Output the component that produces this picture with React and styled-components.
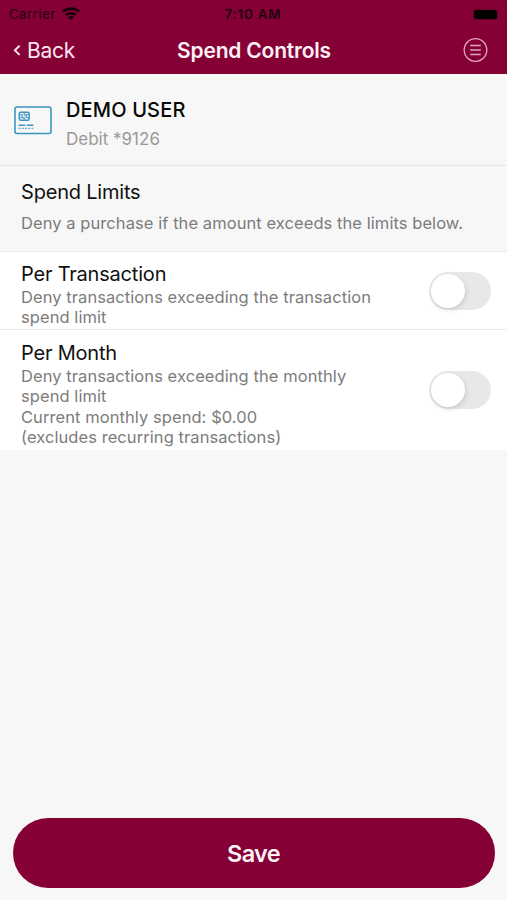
import React, { useState } from 'react';
import styled, { createGlobalStyle } from 'styled-components';

const GlobalStyle = createGlobalStyle`
  * {
    box-sizing: border-box;
  }

  body {
    margin: 0;
    background: #f7f7f7;
    font-family: Inter, 'Liberation Sans', sans-serif;
  }
`;

const Screen = styled.div`
  display: flex;
  flex-direction: column;
  height: 900px;
  background: #f7f7f7;
`;

const Header = styled.header`
  height: 74px;
  background: #840035;
`;

const StatusBar = styled.div`
  display: grid;
  grid-template-columns: 1fr auto 1fr;
  align-items: center;
  height: 27px;
  padding: 0 10px 0 9px;
  color: #22000e;
  font-size: 13px;
  line-height: 27px;
`;

const Carrier = styled.div`
  display: flex;
  align-items: center;
  gap: 6px;
  letter-spacing: 0.6px;
`;

const Clock = styled.div`
  padding-top: 1px;
  font-size: 13.5px;
  font-weight: 600;
  letter-spacing: 0.7px;
`;

const Battery = styled.div`
  justify-self: end;
  width: 23px;
  height: 9px;
  border-radius: 2px;
  background: #000;
  box-shadow: 0 0 2px rgba(0, 0, 0, 0.6);
`;

const NavBar = styled.nav`
  display: grid;
  grid-template-columns: 1fr auto 1fr;
  align-items: center;
  height: 47px;
  padding: 0 19px 0 13px;
  color: #fff;
`;

const BackButton = styled.button`
  display: flex;
  align-items: center;
  gap: 6px;
  padding: 0;
  border: none;
  background: none;
  color: #fbe6ef;
  font-family: inherit;
  font-size: 21px;
  line-height: 26px;
  letter-spacing: -0.3px;
`;

const NavTitle = styled.h1`
  margin: 0;
  padding-left: 7px;
  font-size: 21px;
  font-weight: 600;
  line-height: 26px;
  letter-spacing: -0.2px;
  color: #fdf0f5;
`;

const MenuButton = styled.button`
  justify-self: end;
  display: flex;
  padding: 0;
  border: none;
  background: none;
  color: #e3a5bf;
`;

const CardRow = styled.section`
  display: flex;
  gap: 14px;
  height: 92px;
  padding: 22px 14px 0;
  border-bottom: 1px solid #e6e6e6;
`;

const CardIcon = styled.svg`
  margin-top: 10px;
`;

const CardHolder = styled.div`
  color: #080808;
  font-size: 20px;
  font-weight: 500;
  line-height: 28px;
  letter-spacing: 0.15px;
`;

const CardNumber = styled.div`
  margin-top: 2px;
  color: #999;
  font-size: 17px;
  line-height: 26px;
`;

const LimitsIntro = styled.section`
  height: 86px;
  padding: 13px 21px 0;
  border-bottom: 1px solid #ebebeb;
`;

const Title = styled.h2`
  margin: 0;
  color: #111;
  font-size: 20px;
  font-weight: 400;
  line-height: 26px;
  letter-spacing: -0.2px;
`;

const Description = styled.p`
  margin: ${props => props.$spaced ? '8px 0 0' : '0'};
  color: #7c7c7c;
  font-size: 16.5px;
  line-height: 20.4px;
  letter-spacing: 0.07px;
  white-space: pre-line;
`;

const LimitRow = styled.section`
  display: flex;
  align-items: center;
  justify-content: space-between;
  height: ${props => props.$height}px;
  padding: 0 16px 0 21px;
  background: #fff;
  border-bottom: ${props => props.$last ? 'none' : '1px solid #e9e9e9'};
`;

const LimitText = styled.div`
  width: 380px;
  padding-top: 7px;
`;

const Toggle = styled.button`
  width: 62px;
  height: 38px;
  padding: 2px;
  border: none;
  border-radius: 19px;
  background: ${props => props.$on ? '#840035' : '#e8e8ea'};
`;

const Knob = styled.span`
  display: block;
  width: 34px;
  height: 34px;
  border-radius: 50%;
  background: #fff;
  box-shadow: 1px 2px 5px rgba(0, 0, 0, 0.13);
  transform: translateX(${props => props.$on ? '24px' : '0'});
`;

const Footer = styled.footer`
  margin-top: auto;
  padding: 0 12.5px 12px;
`;

const SaveButton = styled.button`
  display: block;
  width: 100%;
  height: 70px;
  padding: 0;
  border: none;
  border-radius: 35px;
  background: #840035;
  color: #fff3f8;
  font-family: inherit;
  font-size: 23.5px;
  font-weight: 600;
  letter-spacing: -0.7px;
`;

const limits = [
  {
    id: 'transaction',
    title: 'Per Transaction',
    text: 'Deny transactions exceeding the transaction\nspend limit',
    height: 78,
  },
  {
    id: 'month',
    title: 'Per Month',
    text: 'Deny transactions exceeding the monthly\nspend limit\nCurrent monthly spend: $0.00\n(excludes recurring transactions)',
    height: 120,
  },
];

const App = () => {
  const [enabled, setEnabled] = useState({});

  const toggle = (id) => {
    setEnabled({ ...enabled, [id]: !enabled[id] });
  };

  return (
    <Screen>
      <GlobalStyle />
      <Header>
        <StatusBar>
          <Carrier>
            Carrier
            <svg width="18" height="14" viewBox="0 0 18 14" fill="none" stroke="#16000a" strokeWidth="2.5">
              <path d="M1 4.7C5.5 .4 12.5 .4 17 4.7" />
              <path d="M4 8.1C6.8 5.5 11.2 5.5 14 8.1" />
              <path d="M9 13L6 10C7.7 8.5 10.3 8.5 12 10Z" fill="#16000a" stroke="none" />
            </svg>
          </Carrier>
          <Clock>7:10 AM</Clock>
          <Battery />
        </StatusBar>
        <NavBar>
          <BackButton>
            <svg width="8" height="12" viewBox="0 0 8 12" fill="none" stroke="currentColor" strokeWidth="1.9">
              <path d="M6.6 .7L1.8 5.3l4.8 4.6" />
            </svg>
            Back
          </BackButton>
          <NavTitle>Spend Controls</NavTitle>
          <MenuButton aria-label="Menu">
            <svg width="25" height="25" viewBox="0 0 25 25" fill="none" stroke="currentColor" strokeWidth="1.3">
              <circle cx="12.5" cy="12" r="11.3" />
              <path d="M7.2 7.5h10.6M7.2 12h10.6M7.2 16.5h10.6" />
            </svg>
          </MenuButton>
        </NavBar>
      </Header>

      <CardRow>
        <CardIcon width="38" height="29" viewBox="0 0 38 29" fill="none" stroke="#3a96bf">
          <rect x="1" y="1" width="36" height="26.5" rx="2" strokeWidth="1.6" />
          <rect x="5.2" y="6.2" width="10" height="8" rx="1.5" strokeWidth="1.4" />
          <path d="M5 8.8h3.2v3H5M15.4 8.8h-3.2v3h3.2M10.2 6v3h2M8.2 11.8h2V14" strokeWidth="1.1" />
          <path d="M4.6 19.2h6.8M12.8 19.2h6.6" strokeWidth="1.4" />
          <path d="M4.6 22.4h15" strokeWidth="1.2" strokeDasharray="2 1.2" opacity="0.75" />
        </CardIcon>
        <div>
          <CardHolder>DEMO USER</CardHolder>
          <CardNumber>Debit *9126</CardNumber>
        </div>
      </CardRow>

      <LimitsIntro>
        <Title>Spend Limits</Title>
        <Description $spaced>Deny a purchase if the amount exceeds the limits below.</Description>
      </LimitsIntro>

      {limits.map((limit, i) => (
        <LimitRow key={limit.id} $height={limit.height} $last={i === limits.length - 1}>
          <LimitText>
            <Title>{limit.title}</Title>
            <Description>{limit.text}</Description>
          </LimitText>
          <Toggle
            role="switch"
            aria-label={limit.title}
            aria-checked={!!enabled[limit.id]}
            $on={enabled[limit.id]}
            onClick={() => toggle(limit.id)}
          >
            <Knob $on={enabled[limit.id]} />
          </Toggle>
        </LimitRow>
      ))}

      <Footer>
        <SaveButton>Save</SaveButton>
      </Footer>
    </Screen>
  );
};

export default App;
